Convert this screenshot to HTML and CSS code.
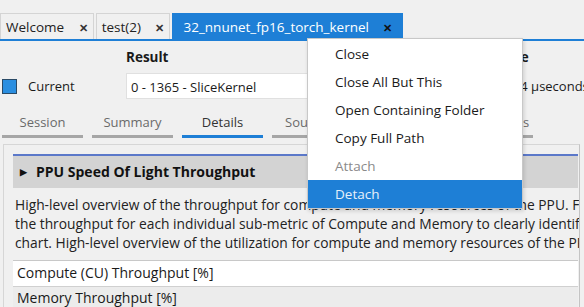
FILE: index.html
```html
<!DOCTYPE html>
<html lang="en">
<head>
  <meta charset="UTF-8">
  <title>Kernel Report</title>
  <link rel="stylesheet" href="styles.css">
</head>
<body>
  <div class="tab-bar">
    <div class="tab">Welcome <span class="close">✕</span></div>
    <div class="tab">test(2) <span class="close">✕</span></div>
    <div class="tab active">32_nnunet_fp16_torch_kernel <span class="close">✕</span></div>
  </div>

  <div class="header">
    <div class="labels">
      <span class="label result-label">Result</span>
      <span class="label time-label">Time</span>
    </div>
    <div class="result-row">
      <span class="swatch"></span>
      <span class="current">Current</span>
      <div class="result-box">0 - 1365 - SliceKernel</div>
      <span class="duration">1.34 µseconds</span>
    </div>
  </div>

  <div class="page-tabs">
    <div class="page-tab">Session</div>
    <div class="page-tab">Summary</div>
    <div class="page-tab active">Details</div>
    <div class="page-tab source">Source</div>
    <div class="page-tab">Context</div>
    <div class="page-tab">Raw Metrics</div>
  </div>

  <div class="panel">
    <div class="section-head"><span class="arrow">▶</span>PPU Speed Of Light Throughput</div>
    <div class="section-desc">
      <span>High-level overview of the throughput for compute and memory resources of the PPU. For each unit,</span>
      <span>the throughput for each individual sub-metric of Compute and Memory to clearly identify the highest</span>
      <span>chart. High-level overview of the utilization for compute and memory resources of the PPU.</span>
    </div>
    <div class="metrics">
      <div class="metric-row">Compute (CU) Throughput [%]</div>
      <div class="metric-row alt">Memory Throughput [%]</div>
    </div>
  </div>

  <ul class="context-menu">
    <li>Close</li>
    <li>Close All But This</li>
    <li>Open Containing Folder</li>
    <li>Copy Full Path</li>
    <li class="disabled">Attach</li>
    <li class="selected">Detach</li>
  </ul>
</body>
</html>
```

FILE: styles.css
```css
body {
  margin: 0;
  background: #f0f0f0;
  font-family: "Open Sans", "Noto Sans", sans-serif;
  font-size: 13px;
  color: #1a1a1a;
  width: 584px;
  height: 307px;
  overflow: hidden;
  position: relative;
}

/* document tabs */
.tab-bar {
  display: flex;
  padding-top: 13px;
  border-bottom: 2px solid #1e7fd6;
}

.tab {
  height: 26px;
  line-height: 26px;
  padding: 0 5px 0 5px;
  margin-right: 2px;
  border: 1px solid #d4d4d4;
  border-bottom: none;
  box-sizing: border-box;
  color: #222;
  font-size: 13.5px;
  white-space: nowrap;
}

.tab .close {
  margin-left: 11px;
  font-size: 11px;
  font-weight: bold;
  color: #333;
}

.tab.active {
  background: #1e7fd6;
  border-color: #1e7fd6;
  color: #fff;
  padding: 0 10px 0 10px;
}

.tab.active .close {
  color: #111;
}

/* result header */
.header {
  padding-top: 5px;
}

.labels {
  display: flex;
  height: 22px;
  align-items: center;
}

.label {
  font-weight: bold;
  font-size: 13.5px;
}

.result-label {
  margin-left: 126px;
}

.time-label {
  margin-left: 327px;
}

.result-row {
  display: flex;
  align-items: center;
  height: 28px;
  margin-top: 4px;
  overflow: hidden;
}

.result-row > * {
  flex-shrink: 0;
}

.swatch {
  width: 13px;
  height: 13px;
  margin-left: 2px;
  background: #2a8ee0;
  border: 1px solid #2a4a66;
}

.current {
  margin-left: 11px;
  width: 98px;
}

.result-box {
  width: 376px;
  height: 26px;
  line-height: 26px;
  box-sizing: border-box;
  padding-left: 4px;
  background: #fff;
  border: 1px solid #e0e0e0;
}

.duration {
  margin-left: 0;
  white-space: nowrap;
}

/* page tabs */
.page-tabs {
  display: flex;
  gap: 9px;
  margin-top: 13px;
  padding-left: 2px;
}

.page-tab {
  width: 81px;
  flex-shrink: 0;
  text-align: center;
  white-space: nowrap;
  color: #6a6a6a;
  padding-bottom: 4px;
  border-bottom: 3px solid #a6a6a6;
}

.page-tab.active {
  color: #333;
  border-bottom-color: #1e7fd6;
}

.page-tab.source {
  text-align: left;
  box-sizing: border-box;
  padding-left: 13px;
}

/* section panel */
.panel {
  margin: 6px 4px 0 3px;
  padding: 9px 1px 0 9px;
  border: 1px solid #d6d6d6;
  border-right-color: #c4c4c4;
  overflow: hidden;
}

.section-head {
  height: 32px;
  line-height: 32px;
  border-top: 2px solid #5b78c9;
  background: #d3d3d3;
  font-weight: bold;
  font-size: 14px;
  color: #111;
  padding-left: 7px;
}

.arrow {
  font-size: 9px;
  margin-right: 9px;
  vertical-align: 2px;
}

.section-desc {
  margin: 7px 0 0 2px;
  line-height: 19px;
  font-size: 13.8px;
  color: #222;
}

.section-desc span {
  display: block;
  white-space: nowrap;
}

.metrics {
  margin-top: 8px;
  border-top: 1px solid #c8c8c8;
}

.metric-row {
  height: 25px;
  line-height: 24px;
  padding-left: 4px;
  background: #fff;
  border-bottom: 1px solid #d0d0d0;
  font-size: 14px;
}

.metric-row.alt {
  background: #ececec;
  line-height: 22px;
}

/* context menu */
.context-menu {
  position: absolute;
  left: 307px;
  top: 38px;
  width: 214px;
  margin: 0;
  padding: 1px 0 0;
  list-style: none;
  background: #fff;
  border: 1px solid #c8c8c8;
  box-shadow: 1px 2px 4px rgba(0, 0, 0, 0.15);
}

.context-menu li {
  height: 28px;
  line-height: 28px;
  padding-left: 27px;
  font-size: 13.5px;
  color: #1a1a1a;
}

.context-menu li.disabled {
  color: #8a8a8a;
}

.context-menu li.selected {
  background: #1e7fd6;
  color: #e6f0fa;
}
```
